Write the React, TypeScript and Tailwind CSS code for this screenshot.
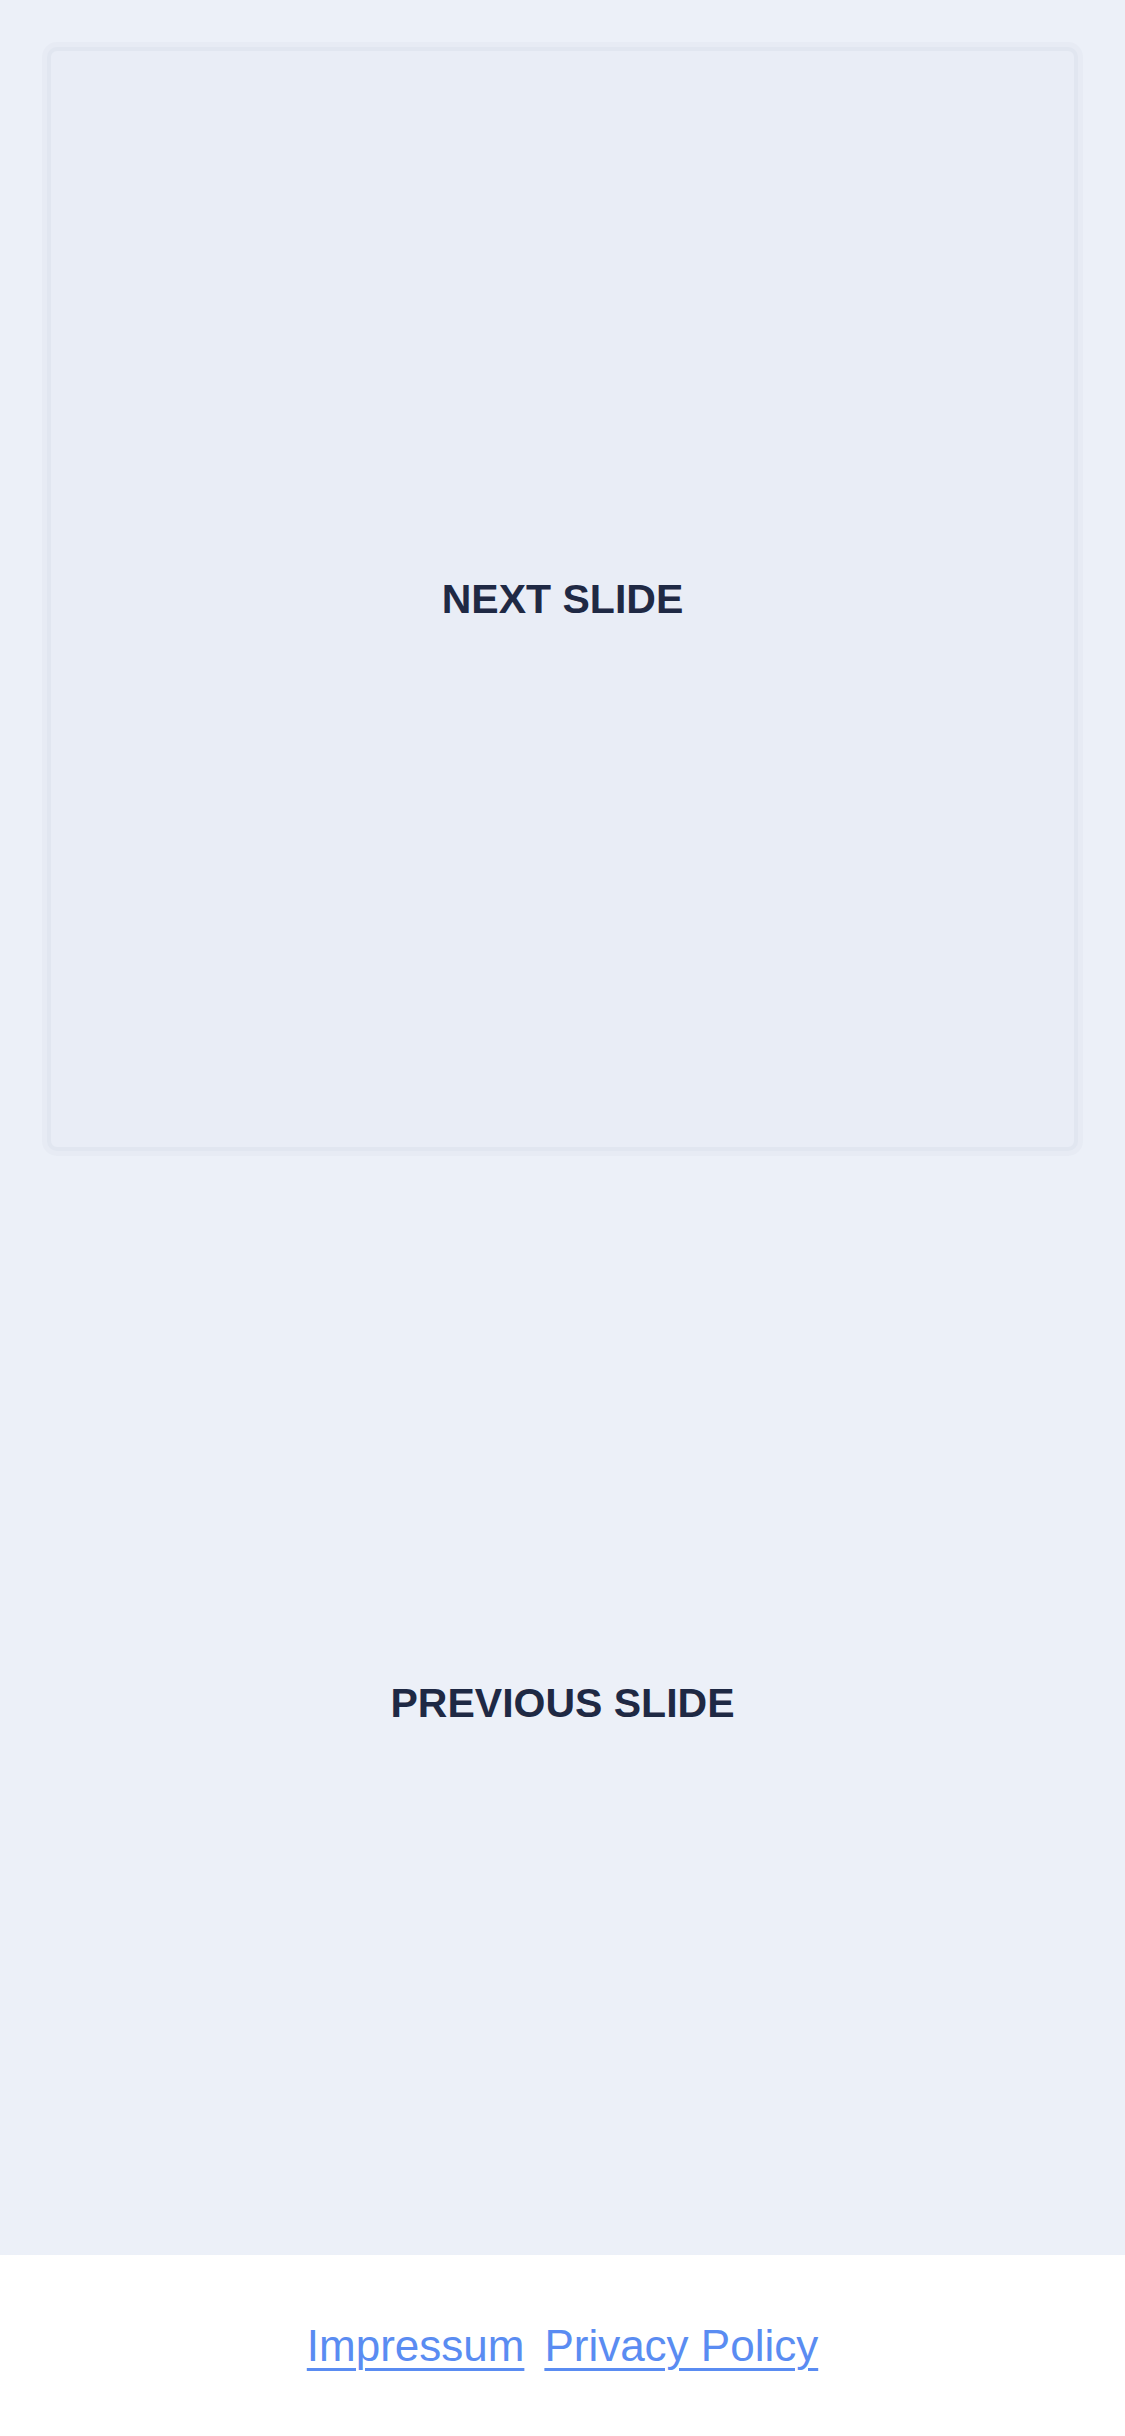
import React from 'react';

const slideTitle = 'text-[41px] font-bold text-[#1f2944] uppercase leading-none';

const App: React.FC = () => {
    return (
        <div className="min-h-screen w-full bg-[#ecf0f8] flex flex-col" style={{ fontFamily: '"Liberation Sans", Arial, sans-serif' }}>
            <main className="flex flex-col pt-[47px] px-[47px]">
                {/* next slide card */}
                <div className="h-[1104px] rounded-[10px] border-[4px] border-[#e1e6f0] bg-[#e9edf6] shadow-[0_0_0_5px_#e7ebf4] flex items-center justify-center">
                    <span className={slideTitle}>Next Slide</span>
                </div>

                {/* previous slide area */}
                <div className="h-[1104px] flex items-center justify-center">
                    <span className={slideTitle}>Previous Slide</span>
                </div>
            </main>

            <footer className="h-[181px] bg-white flex items-center justify-center gap-[20px]">
                <a href="#" className="text-[44px] leading-none text-[#5a8cf2] underline decoration-[3px] underline-offset-[7px]">Impressum</a>
                <a href="#" className="text-[44px] leading-none text-[#5a8cf2] underline decoration-[3px] underline-offset-[7px]">Privacy Policy</a>
            </footer>
        </div>
    );
};

export default App;
